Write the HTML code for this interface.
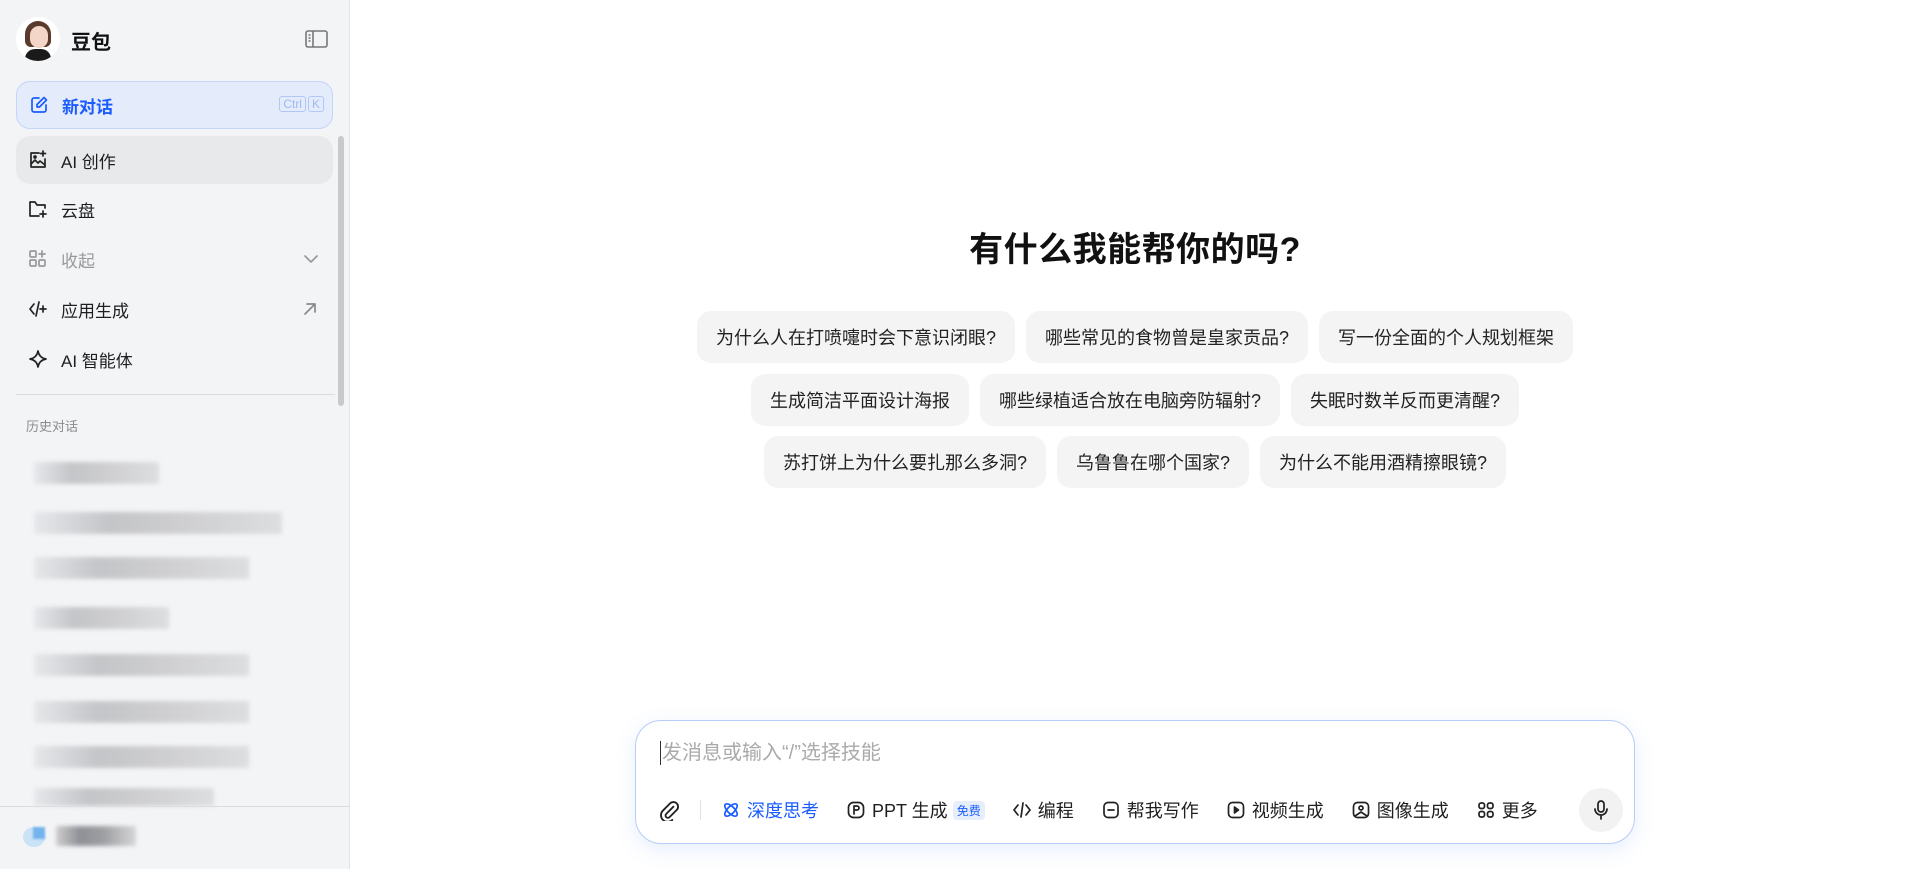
<!DOCTYPE html>
<html><head><meta charset="utf-8"><style>
*{box-sizing:border-box;margin:0;padding:0}
body{width:1920px;height:869px;overflow:hidden;background:#fff;font-family:"Liberation Sans","Noto Sans CJK SC",sans-serif;color:#111;position:relative}
.sb{position:absolute;left:0;top:0;width:350px;height:869px;background:#f3f4f6;border-right:1px solid #e2e3e6}
.abs{position:absolute}
.row{position:absolute;left:16px;width:317px;height:48px;border-radius:14px;display:flex;align-items:center;padding-left:12px;font-size:17px;color:#1f1f1f}
.row svg{width:20px;height:20px;margin-right:13px;fill:none;stroke:#222;stroke-width:1.7;stroke-linecap:round;stroke-linejoin:round}
.hist{position:absolute;left:34px;height:22px;background:linear-gradient(90deg,#e4e5e8,#b9babd 30%,#c6c6c8 60%,#d8d9db);filter:blur(2px);opacity:.8}
.main h1{position:absolute;left:350px;width:1570px;top:222px;text-align:center;font-size:34px;font-weight:bold;letter-spacing:.5px}
.chips{position:absolute;left:350px;width:1570px;display:flex;justify-content:center;gap:11px}
.chip{height:52px;border-radius:14px;background:#f4f4f5;font-size:18px;padding:0 19px;display:flex;align-items:center;color:#222}
.inp{position:absolute;left:635px;top:720px;width:1000px;height:124px;border:1px solid #b8cdf7;border-radius:26px;box-shadow:0 6px 20px rgba(90,140,240,.15);background:#fff}
.ph{position:absolute;left:24px;top:20px;font-size:20px;color:#aaa;border-left:1.5px solid #333;padding-left:1px;line-height:24px}
.tb{position:absolute;top:74px;left:22px;display:flex;align-items:center;height:30px;font-size:18px;color:#1f1f1f}
.tb svg{width:20px;height:20px;fill:none;stroke:#222;stroke-width:1.7;stroke-linecap:round;stroke-linejoin:round;margin-right:6px}
.it{display:flex;align-items:center;margin-right:27px}
</style></head><body>
<div class="sb">
  <div class="abs" style="left:16px;top:17px;width:44px;height:44px;border-radius:50%;background:#fff;overflow:hidden">
    <div class="abs" style="left:9px;top:4px;width:26px;height:26px;border-radius:13px 13px 6px 6px;background:#5a3a2c"></div>
    <div class="abs" style="left:14px;top:9px;width:18px;height:22px;border-radius:9px;background:#f4d6c8"></div>
    <div class="abs" style="left:9px;top:32px;width:26px;height:14px;border-radius:10px 10px 0 0;background:#1a1a1a"></div>
  </div>
  <div class="abs" style="left:71px;top:26px;font-size:20px;font-weight:bold">豆包</div>
  <svg class="abs" style="left:305px;top:30px" width="23" height="18" viewBox="0 0 23 18" fill="none" stroke="#777" stroke-width="1.6"><rect x="1" y="1" width="21" height="16" rx="2"/><line x1="8" y1="1" x2="8" y2="17"/><line x1="3.5" y1="5" x2="5.5" y2="5"/><line x1="3.5" y1="8" x2="5.5" y2="8"/><line x1="3.5" y1="11" x2="5.5" y2="11"/></svg>
  <div class="row" style="top:81px;height:48px;background:#e4ebfb;border:1px solid #c4d5fa;color:#1a5cff;font-weight:bold">
    <svg viewBox="0 0 20 20" style="stroke:#1a5cff"><path d="M10 3H5a2 2 0 0 0-2 2v10a2 2 0 0 0 2 2h10a2 2 0 0 0 2-2v-5"/><path d="M15 2.5l2.5 2.5-7 7H8v-2.5z"/></svg>新对话
    <span class="abs" style="right:8px;top:14px;font-size:12px;color:#9fb8f5;font-weight:normal;display:flex;gap:2px"><span style="border:1px solid #b0c7f7;border-radius:3px;padding:0 3px">Ctrl</span><span style="border:1px solid #b0c7f7;border-radius:3px;padding:0 3px">K</span></span>
  </div>
  <div class="row" style="top:136px;background:#e8e9eb"><svg viewBox="0 0 20 20"><path d="M11 3H3v14h14V9"/><path d="M3 14l4-4 3 3 2-2 5 4"/><circle cx="7" cy="7" r="1"/><path d="M15 1v5M12.5 3.5h5"/></svg>AI 创作</div>
  <div class="row" style="top:185px"><svg viewBox="0 0 20 20"><path d="M17 9V6H9L7 3H2v14h9"/><path d="M15 12v6M12 15h6"/></svg>云盘</div>
  <div class="row" style="top:235px;color:#999"><svg viewBox="0 0 20 20" style="stroke:#999"><rect x="2" y="2" width="6" height="6" rx="1"/><rect x="2" y="11" width="6" height="6" rx="1"/><rect x="11" y="11" width="6" height="6" rx="1"/><path d="M14 2v6M11 5h6"/></svg>收起
    <svg class="abs" style="left:287px;top:16px;width:16px;height:16px;stroke:#999" viewBox="0 0 16 16"><path d="M2 5l6 6 6-6"/></svg></div>
  <div class="row" style="top:285px"><svg viewBox="0 0 20 20"><path d="M6 5l-4 5 4 5M11 3l-3 14M15 7v6M12 10h6"/></svg>应用生成
    <svg class="abs" style="left:287px;top:17px;width:14px;height:14px;stroke:#888" viewBox="0 0 14 14"><path d="M2 12L12 2M4 2h8v8"/></svg></div>
  <div class="row" style="top:335px"><svg viewBox="0 0 20 20"><path d="M10 2c.8 4.5 3.5 7.2 8 8-4.5.8-7.2 3.5-8 8-.8-4.5-3.5-7.2-8-8 4.5-.8 7.2-3.5 8-8z"/></svg>AI 智能体</div>
  <div class="abs" style="left:16px;top:394px;width:319px;height:1px;background:#dcdde0"></div>
  <div class="abs" style="left:338px;top:136px;width:6px;height:270px;border-radius:3px;background:#c9c9c9"></div>
  <div class="abs" style="left:26px;top:416px;font-size:13px;color:#8a8a8a">历史对话</div>
  <div class="hist" style="top:462px;width:125px"></div>
  <div class="hist" style="top:512px;width:248px"></div>
  <div class="hist" style="top:557px;width:215px"></div>
  <div class="hist" style="top:607px;width:135px"></div>
  <div class="hist" style="top:654px;width:215px"></div>
  <div class="hist" style="top:701px;width:215px"></div>
  <div class="hist" style="top:746px;width:215px"></div>
  <div class="hist" style="top:788px;width:180px;height:18px"></div>
  <div class="abs" style="left:0;top:806px;width:349px;height:1px;background:#dcdde0"></div>
  <div class="abs" style="left:23px;top:827px;width:22px;height:20px;border-radius:50%;background:#cbe3f7"></div>
  <div class="abs" style="left:33px;top:827px;width:12px;height:12px;background:#74b4ec;filter:blur(1px)"></div>
  <div class="hist" style="left:56px;top:826px;width:80px;height:20px;background:linear-gradient(90deg,#c6c3c3,#767880 30%,#8a8b8e 60%,#cfcfd1)"></div>
</div>
<div class="main">
  <h1>有什么我能帮你的吗?</h1>
  <div class="chips" style="top:311px"><div class="chip">为什么人在打喷嚏时会下意识闭眼?</div><div class="chip">哪些常见的食物曾是皇家贡品?</div><div class="chip">写一份全面的个人规划框架</div></div>
  <div class="chips" style="top:374px"><div class="chip">生成简洁平面设计海报</div><div class="chip">哪些绿植适合放在电脑旁防辐射?</div><div class="chip">失眠时数羊反而更清醒?</div></div>
  <div class="chips" style="top:436px"><div class="chip">苏打饼上为什么要扎那么多洞?</div><div class="chip">乌鲁鲁在哪个国家?</div><div class="chip">为什么不能用酒精擦眼镜?</div></div>
</div>
<div class="inp">
  <div class="ph">发消息或输入“/”选择技能</div>
  <div class="tb">
    <svg viewBox="0 0 20 20" style="width:22px;height:22px;margin-right:20px"><path d="M14 7l-6.5 6.5a2 2 0 0 0 3 3L17 10a4 4 0 0 0-6-6l-6.5 6.5a6 6 0 0 0 8.5 8.5"/></svg>
    <div style="width:1px;height:20px;background:#e2e2e2;margin-right:20px"></div>
    <div class="it" style="color:#1a5cff"><svg viewBox="0 0 20 20" style="stroke:#1a5cff"><ellipse cx="10" cy="10" rx="8" ry="3.5" transform="rotate(45 10 10)"/><ellipse cx="10" cy="10" rx="8" ry="3.5" transform="rotate(-45 10 10)"/></svg>深度思考</div>
    <div class="it"><svg viewBox="0 0 20 20"><rect x="2.5" y="2.5" width="15" height="15" rx="5"/><path d="M8 14V6h3a2 2 0 0 1 0 4H8"/></svg>PPT 生成<span style="margin-left:5px;font-size:12px;color:#1a5cff;background:#e6eefc;border-radius:4px;padding:1px 4px">免费</span></div>
    <div class="it"><svg viewBox="0 0 20 20"><path d="M6 5l-4 5 4 5M14 5l4 5-4 5M11 3l-2 14"/></svg>编程</div>
    <div class="it"><svg viewBox="0 0 20 20"><rect x="3" y="2.5" width="14" height="15" rx="4"/><path d="M7 10h6"/></svg>帮我写作</div>
    <div class="it"><svg viewBox="0 0 20 20"><rect x="2.5" y="2.5" width="15" height="15" rx="4"/><path d="M8.5 7v6l4-3z" fill="#222"/></svg>视频生成</div>
    <div class="it"><svg viewBox="0 0 20 20"><rect x="2.5" y="2.5" width="15" height="15" rx="4"/><circle cx="10" cy="8" r="2"/><path d="M4 16l6-4 6 4"/></svg>图像生成</div>
    <div class="it"><svg viewBox="0 0 20 20"><rect x="3" y="3" width="5.5" height="5.5" rx="2"/><rect x="11.5" y="3" width="5.5" height="5.5" rx="2"/><rect x="3" y="11.5" width="5.5" height="5.5" rx="2"/><rect x="11.5" y="11.5" width="5.5" height="5.5" rx="2"/></svg>更多</div>
  </div>
  <div class="abs" style="left:943px;top:67px;width:44px;height:44px;border-radius:50%;background:#f2f2f2;display:flex;align-items:center;justify-content:center">
    <svg width="20" height="22" viewBox="0 0 20 22" fill="none" stroke="#222" stroke-width="1.7" stroke-linecap="round"><rect x="7" y="2" width="6" height="11" rx="3"/><path d="M4 10a6 6 0 0 0 12 0M10 16v4"/></svg>
  </div>
</div>
</body></html>
